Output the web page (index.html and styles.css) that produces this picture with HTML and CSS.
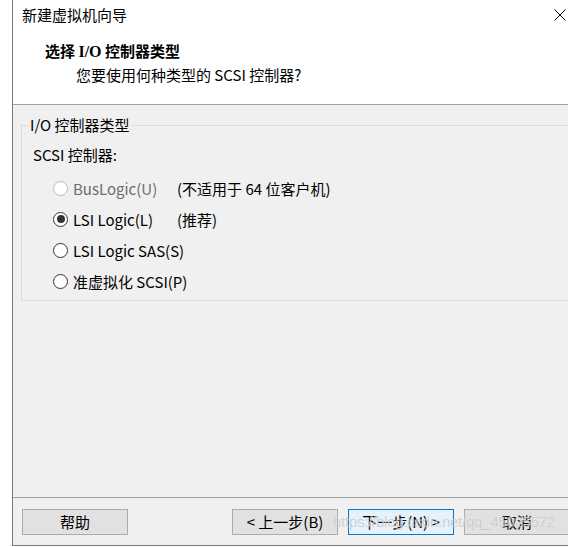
FILE: index.html
```html
<!DOCTYPE html>
<html lang="zh-CN">
<head>
<meta charset="utf-8">
<title>新建虚拟机向导</title>
<link rel="stylesheet" href="styles.css">
</head>
<body>
<div class="window">
  <div class="titlebar">
    <span class="title">新建虚拟机向导</span>
    <span class="close">
      <svg width="12" height="12" viewBox="0 0 12 12"><path d="M0.5 0.5 L11.5 11.5 M11.5 0.5 L0.5 11.5" stroke="#000" stroke-width="1" fill="none"/></svg>
    </span>
  </div>
  <div class="header">
    <div class="h-title">选择 <span class="serif">I/O</span> 控制器类型</div>
    <div class="h-sub">您要使用何种类型的 SCSI 控制器?</div>
  </div>
  <div class="content">
    <fieldset class="group">
      <legend>I/O 控制器类型</legend>
      <div class="label">SCSI 控制器:</div>
      <div class="options">
        <div class="opt disabled"><span class="radio"></span><span class="name">BusLogic(U)</span><span class="note">(不适用于 64 位客户机)</span></div>
        <div class="opt"><span class="radio checked"></span><span class="name">LSI Logic(L)</span><span class="note">(推荐)</span></div>
        <div class="opt"><span class="radio"></span><span class="name">LSI Logic SAS(S)</span></div>
        <div class="opt"><span class="radio"></span><span class="name">准虚拟化 SCSI(P)</span></div>
      </div>
    </fieldset>
  </div>
  <div class="footer">
    <button class="btn">帮助</button>
    <span class="spacer"></span>
    <button class="btn">&lt; 上一步(B)</button>
    <button class="btn primary">下一步(N) &gt;</button>
    <button class="btn">取消</button>
    <span class="watermark">https://blog.csdn.net/qq_45025572</span>
  </div>
</div>
</body>
</html>
```
FILE: styles.css
```css
html, body {
  margin: 0;
  padding: 0;
  background: #ffffff;
  overflow: hidden;
  width: 568px;
  height: 547px;
}
body {
  font-family: "Noto Sans CJK SC", "Noto Sans", sans-serif;
  font-size: 15px;
  color: #000;
}
.window {
  margin-left: 12px;
  width: 570px;
  height: 545px;
  border-left: 1px solid #7a7a7a;
  border-bottom: 1px solid #7a7a7a;
  background: #f0f0f0;
  display: flex;
  flex-direction: column;
}
.titlebar {
  height: 30px;
  background: #fff;
  display: flex;
  justify-content: space-between;
  align-items: center;
  padding-left: 9px;
}
.title {
  line-height: 30px;
}
.close {
  width: 46px;
  height: 30px;
  display: flex;
  align-items: center;
  justify-content: center;
}
.header {
  background: #fff;
  border-bottom: 1px solid #a0a0a0;
  padding-top: 11px;
  box-sizing: border-box;
  height: 75px;
}
.h-title {
  margin-left: 32px;
  font-weight: bold;
  line-height: 20px;
}
.serif {
  font-family: "Liberation Serif", serif;
  font-size: 16px;
}
.h-sub {
  margin-left: 63px;
  margin-top: 3px;
  line-height: 20px;
}
.content {
  flex: 1;
  padding-top: 11px;
}
.group {
  margin: 0 0 0 8px;
  padding: 0 0 9px 6px;
  border: 1px solid #dcdcdc;
  min-width: 0;
}
.group legend {
  padding: 0 2px;
  line-height: 18px;
}
.label {
  margin-top: 11px;
  margin-left: 5px;
  line-height: 20px;
}
.options {
  margin-top: 13px;
  margin-left: 25px;
  display: flex;
  flex-direction: column;
  gap: 11px;
}
.opt {
  display: flex;
  align-items: center;
  height: 20px;
}
.radio {
  width: 13px;
  height: 13px;
  border: 1px solid #333;
  border-radius: 50%;
  background: #fff;
  display: flex;
  align-items: center;
  justify-content: center;
  flex: none;
}
.radio.checked::after {
  content: "";
  width: 8px;
  height: 8px;
  border-radius: 50%;
  background: #333;
}
.name {
  margin-left: 5px;
  width: 104px;
  white-space: nowrap;
}
.disabled .radio {
  border-color: #bcbcbc;
  background: #fff;
}
.disabled .name {
  color: #6d6d6d;
}
.note {
  white-space: nowrap;
}
.footer {
  border-top: 1px solid #a0a0a0;
  display: flex;
  align-items: flex-start;
  gap: 10px;
  padding: 11px 13px 0 9px;
  box-sizing: border-box;
  height: 48px;
  position: relative;
}
.spacer {
  flex: 1;
}
.btn {
  width: 106px;
  height: 26px;
  background: #e1e1e1;
  border: 1px solid #adadad;
  font-family: "Noto Sans CJK SC", "Noto Sans", sans-serif;
  font-size: 15px;
  color: #000;
  padding: 0;
  line-height: 22px;
  flex: none;
}
.btn.primary {
  background: #e5f1fb;
  border-color: #0078d7;
}
.watermark {
  position: absolute;
  left: 320px;
  top: 12px;
  font-family: "Liberation Sans", Arial, sans-serif;
  font-size: 15px;
  letter-spacing: -0.25px;
  line-height: 24px;
  color: rgba(170, 170, 170, 0.55);
  text-shadow: 0 0 1px rgba(255, 255, 255, 0.8);
  white-space: nowrap;
  pointer-events: none;
}
```
